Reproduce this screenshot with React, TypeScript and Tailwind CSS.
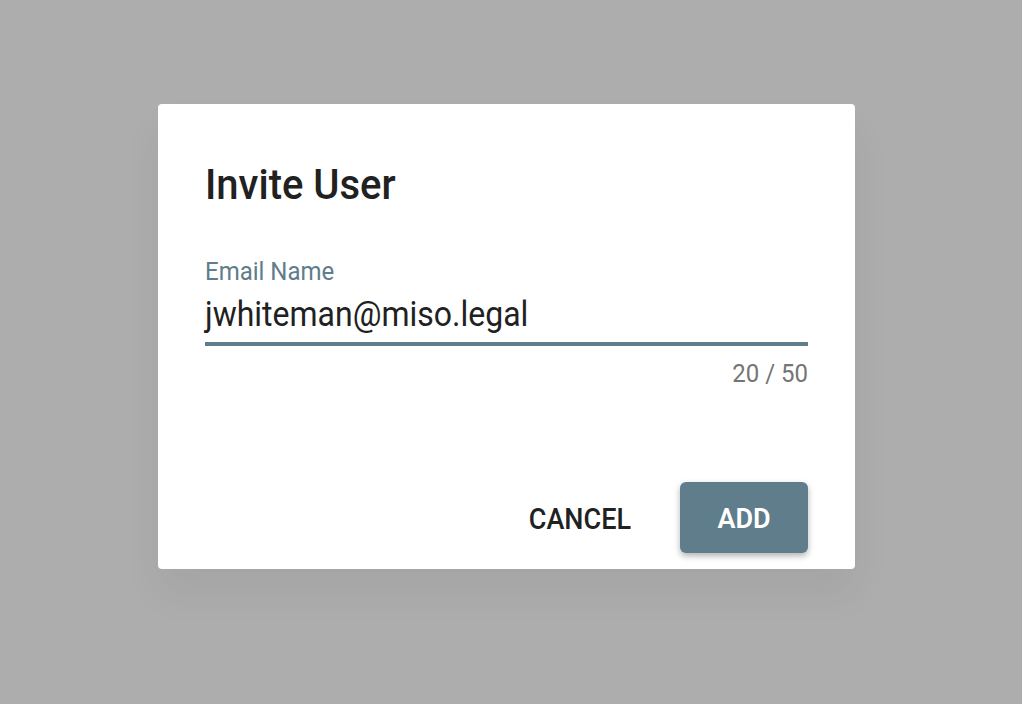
export default function App() {
    return (
        <div
            className="w-[1022px] h-[704px] bg-[#adadad] flex items-start justify-start"
            style={{ fontFamily: "Roboto, 'Liberation Sans', sans-serif" }}
        >
            {/* Dialog */}
            <div className="mt-[104px] ml-[158px] w-[697px] h-[465px] bg-white rounded-[4px] shadow-[0_24px_40px_rgba(0,0,0,0.05)] flex flex-col px-[47px]">
                {/* Title */}
                <h2 className="mt-[55px] text-[40px] leading-[48px] font-medium text-[#212121] scale-y-[1.08] origin-top">Invite User</h2>

                {/* Email field */}
                <label className="mt-[51px] text-[24px] leading-[24px] text-[#607d8b] scale-y-[1.08] origin-top">Email Name</label>
                <div className="mt-[11px] text-[32px] leading-[40px] text-[#212121] scale-y-[1.08] origin-top">jwhiteman@miso.legal</div>
                <div className="mt-[9px] h-[4px] bg-[#607d8b]" />
                <div className="mt-[14px] text-[24px] leading-[24px] text-[#757575] text-right scale-y-[1.08] origin-top">20 / 50</div>

                {/* Actions */}
                <div className="mt-auto mb-[16px] flex items-center justify-end">
                    <button className="pt-[4px] text-[27px] font-medium text-[#212121] mr-[49px] scale-y-[1.08]">CANCEL</button>
                    <button className="pt-[4px] w-[128px] h-[71px] rounded-[6px] bg-[#607d8b] text-white text-[27px] font-semibold shadow-[0_3px_6px_rgba(0,0,0,0.3)]">
                        ADD
                    </button>
                </div>
            </div>
        </div>
    );
}
